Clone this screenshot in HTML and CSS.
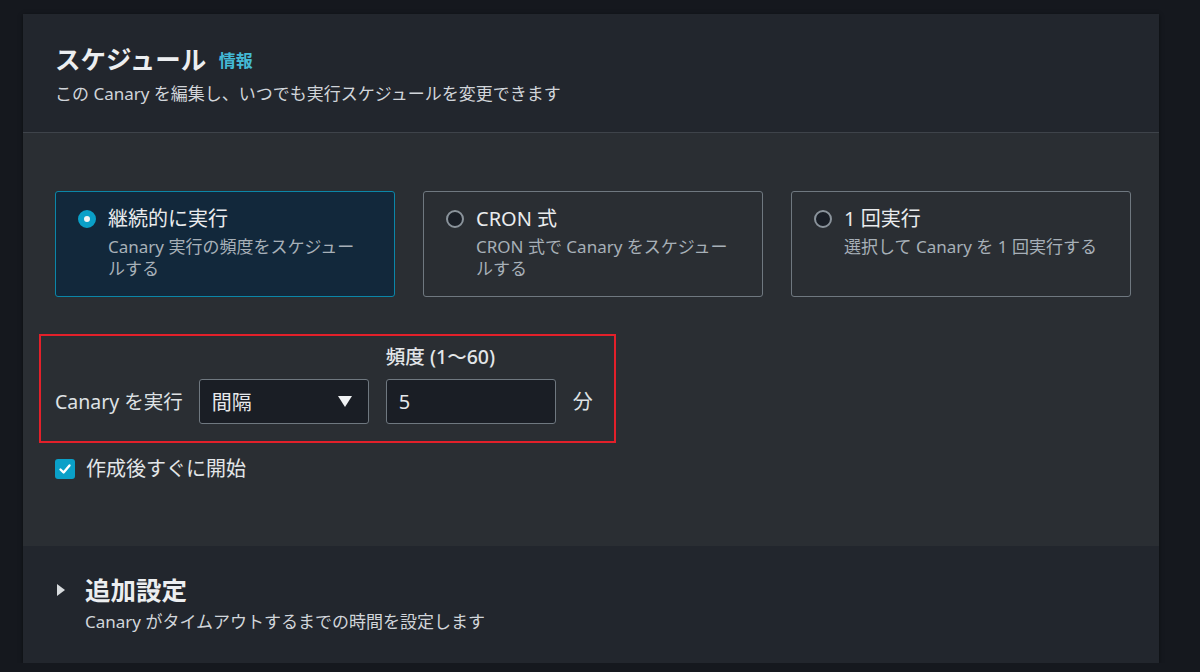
FILE: index.html
```html
<!DOCTYPE html>
<html lang="ja">
<head>
    <meta charset="UTF-8">
    <meta name="viewport" content="width=device-width, initial-scale=1.0">
    <title>スケジュール</title>
    <link rel="stylesheet" href="styles.css">
</head>
<body>
    <div class="panel">
        <div class="panel-header">
            <h2>スケジュール <a class="info-link" href="#">情報</a></h2>
            <p class="desc">この Canary を編集し、いつでも実行スケジュールを変更できます</p>
        </div>

        <div class="panel-body">
            <div class="tiles">
                <div class="tile selected">
                    <span class="radio checked"></span>
                    <div class="tile-text">
                        <div class="tile-title">継続的に実行</div>
                        <div class="tile-sub">Canary 実行の頻度をスケジュールする</div>
                    </div>
                </div>
                <div class="tile">
                    <span class="radio"></span>
                    <div class="tile-text">
                        <div class="tile-title">CRON 式</div>
                        <div class="tile-sub">CRON 式で Canary をスケジュールする</div>
                    </div>
                </div>
                <div class="tile">
                    <span class="radio"></span>
                    <div class="tile-text">
                        <div class="tile-title">1 回実行</div>
                        <div class="tile-sub">選択して Canary を 1 回実行する</div>
                    </div>
                </div>
            </div>

            <div class="run-row">
                <span class="run-label">Canary を実行</span>
                <div class="select">
                    <span>間隔</span>
                    <span class="caret"></span>
                </div>
                <div class="field">
                    <label class="field-label">頻度 (1～60)</label>
                    <div class="input">5</div>
                </div>
                <span class="unit">分</span>
            </div>

            <div class="check-row">
                <span class="checkbox">
                    <svg width="14" height="14" viewBox="0 0 14 14">
                        <path d="M2.5 7.5 L5.6 10.5 L11.5 3.5" fill="none" stroke="#fff" stroke-width="2.4" stroke-linecap="round" stroke-linejoin="round"/>
                    </svg>
                </span>
                <span class="check-label">作成後すぐに開始</span>
            </div>
        </div>

        <div class="panel-footer">
            <h3><span class="expander"></span>追加設定</h3>
            <p class="desc footer-desc">Canary がタイムアウトするまでの時間を設定します</p>
        </div>
    </div>
</body>
</html>
```

FILE: styles.css
```css
body {
    margin: 0;
    background-color: #15181e;
    font-family: "Noto Sans", "Noto Sans CJK JP", sans-serif;
    color: #e6e8eb;
}
.panel {
    margin: 14px 0 0 23px;
    width: 1136px;
    background-color: #22262d;
    box-shadow: 0 1px 4px rgba(0, 0, 0, 0.5);
}
.panel-header {
    padding: 28px 32px 26px 32px;
    border-bottom: 1px solid #3e434a;
}
h2 {
    margin: 0;
    font-size: 25.5px;
    line-height: 34px;
    font-weight: 700;
    color: #eceef0;
}
.info-link {
    margin-left: 6px;
    font-size: 17px;
    font-weight: 700;
    color: #44b9d6;
    text-decoration: none;
    vertical-align: 2px;
}
.desc {
    margin: 4px 0 0 0;
    font-size: 17px;
    line-height: 24px;
    color: #d1d5da;
}
.panel-body {
    background-color: #2a2e33;
    padding: 58px 28px 65px 32px;
}
.tiles {
    display: grid;
    grid-template-columns: repeat(3, 340px);
    gap: 28px;
}
.tile {
    display: flex;
    gap: 12px;
    height: 106px;
    box-sizing: border-box;
    padding: 14px 26px 0 22px;
    border: 1px solid #6f7880;
    border-radius: 3px;
}
.tile.selected {
    background-color: #12283b;
    border-color: #0b86a8;
}
.radio {
    flex: none;
    width: 18px;
    height: 18px;
    margin-top: 4px;
    box-sizing: border-box;
    border: 2px solid #8a939b;
    border-radius: 50%;
    background-color: #1a1f27;
}
.radio.checked {
    border: 6px solid #0aa0c8;
    background-color: #f2f4f5;
}
.tile-title {
    font-size: 20px;
    line-height: 26px;
    color: #e9ebed;
}
.tile-sub {
    margin-top: 4px;
    font-size: 17px;
    line-height: 22px;
    color: #a7b0b8;
}
.run-row {
    display: flex;
    align-items: flex-end;
    width: fit-content;
    margin: 37px 0 0 -16px;
    padding: 9px 21px 17px 14px;
    border: 2px solid #e3202a;
}
.run-label {
    font-size: 19.5px;
    line-height: 45px;
    margin-right: 16px;
    color: #dfe2e5;
}
.select {
    display: flex;
    align-items: center;
    justify-content: space-between;
    width: 170px;
    height: 45px;
    box-sizing: border-box;
    padding: 0 16px 0 12px;
    background-color: #1a1e25;
    border: 1px solid #6f7880;
    border-radius: 3px;
    font-size: 20px;
    color: #e6e8eb;
}
.caret {
    width: 0;
    height: 0;
    border-left: 7px solid transparent;
    border-right: 7px solid transparent;
    border-top: 11px solid #f0f2f4;
}
.field {
    margin-left: 17px;
}
.field-label {
    display: block;
    font-size: 19.5px;
    line-height: 24px;
    font-weight: 500;
    margin-bottom: 10px;
    color: #e3e6e9;
}
.input {
    width: 170px;
    height: 45px;
    box-sizing: border-box;
    padding: 0 12px;
    background-color: #1a1e25;
    border: 1px solid #6f7880;
    border-radius: 3px;
    font-size: 20px;
    line-height: 43px;
    color: #e6e8eb;
}
.unit {
    margin-left: 17px;
    font-size: 20px;
    line-height: 45px;
    color: #dfe2e5;
}
.check-row {
    display: flex;
    align-items: center;
    gap: 11px;
    margin-top: 14px;
}
.checkbox {
    display: flex;
    align-items: center;
    justify-content: center;
    width: 20px;
    height: 20px;
    border-radius: 3px;
    background-color: #0aa0c8;
}
.check-label {
    font-size: 20px;
    line-height: 24px;
    color: #e3e6e9;
}
.panel-footer {
    padding: 28px 32px 29px 32px;
}
h3 {
    display: flex;
    align-items: center;
    margin: 0;
    font-size: 25.5px;
    line-height: 32px;
    font-weight: 700;
    color: #eceef0;
}
.expander {
    width: 0;
    height: 0;
    margin: 0 20px 0 2px;
    border-top: 6px solid transparent;
    border-bottom: 6px solid transparent;
    border-left: 8px solid #d8dbde;
}
.footer-desc {
    margin-left: 30px;
    font-size: 17px;
}
```
